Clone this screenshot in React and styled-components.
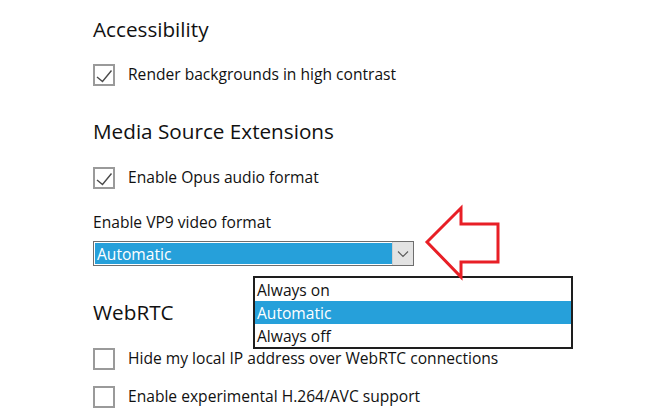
import React from "react";
import styled, { createGlobalStyle } from "styled-components";

const Global = createGlobalStyle`
  html, body { margin: 0; padding: 0; background: #fff; }
  body { font-family: "Segoe UI", "Open Sans", "Noto Sans", sans-serif; color: #000; }
`;

const Page = styled.div`
  position: relative;
  width: 655px;
  height: 409px;
  overflow: hidden;
  box-sizing: border-box;
  padding: 15px 0 0 93px;
  display: flex;
  flex-direction: column;
`;

const Heading = styled.h2`
  margin: ${(p) => p.$top || 0}px 0 0 0;
  font-size: 20.7px;
  font-weight: 400;
  line-height: 28px;
  height: 28px;
  color: #111;
`;

const Row = styled.label`
  margin-top: ${(p) => p.$top || 0}px;
  display: flex;
  align-items: center;
  gap: 13px;
  height: 22px;
  font-size: 15.6px;
  line-height: 21px;
  color: #111;
`;

const Text = styled.span`
  padding-bottom: 1px;
`;

const Box = styled.span`
  box-sizing: border-box;
  width: 22px;
  height: 22px;
  border: 2px solid #9a9a9a;
  background: #fff;
  display: flex;
  align-items: center;
  justify-content: center;
  flex: none;
`;

const FieldLabel = styled.div`
  margin-top: ${(p) => p.$top || 0}px;
  font-size: 15.6px;
  line-height: 20px;
  height: 20px;
  color: #111;
`;

const SelectWrap = styled.div`
  position: relative;
  margin-top: 9px;
  width: 321px;
`;

const Select = styled.div`
  box-sizing: border-box;
  width: 321px;
  height: 25px;
  border: 1px solid #6e6e6e;
  padding: 1px 0 1px 1px;
  display: flex;
  background: #fff;
`;

const SelectValue = styled.div`
  flex: 1;
  background: #26a0da;
  color: #fff;
  font-size: 15.6px;
  line-height: 21px;
  padding: 1px 0 0 2px;
  box-sizing: border-box;
`;

const SelectButton = styled.div`
  width: 20px;
  margin: -1px 0;
  background: #e3e3e3;
  border-left: 1px solid #d0d0d0;
  display: flex;
  align-items: center;
  justify-content: center;
`;

const List = styled.ul`
  position: absolute;
  left: 160px;
  top: 35px;
  box-sizing: border-box;
  width: 320px;
  margin: 0;
  padding: 0;
  list-style: none;
  border: 2px solid #1e1e1e;
  background: #fff;
  z-index: 2;
`;

const Item = styled.li`
  height: 23px;
  line-height: 24px;
  font-size: 15.6px;
  padding-left: 2px;
  overflow: hidden;
  background: ${(p) => (p.$selected ? "#26a0da" : "#fff")};
  color: ${(p) => (p.$selected ? "#fff" : "#111")};
`;

const Arrow = styled.svg`
  position: absolute;
  left: 0;
  top: 0;
  pointer-events: none;
  z-index: 3;
`;

const Check = () => (
  <svg width="18" height="18" viewBox="0 0 18 18">
    <polyline
      points="2,11 7.5,15.5 16.5,4.5"
      fill="none"
      stroke="#4a4a4a"
      strokeWidth="1.4"
    />
  </svg>
);

const Checkbox = ({ checked, children, top }) => (
  <Row $top={top}>
    <Box>{checked && <Check />}</Box>
    <Text>{children}</Text>
  </Row>
);

export default function App() {
  return (
    <>
      <Global />
      <Page>
        <Heading>Accessibility</Heading>
        <Checkbox checked top={21}>
          Render backgrounds in high contrast
        </Checkbox>
        <Heading $top={31}>Media Source Extensions</Heading>
        <Checkbox checked top={22}>
          Enable Opus audio format
        </Checkbox>
        <FieldLabel $top={23}>Enable VP9 video format</FieldLabel>
        <SelectWrap>
          <Select>
            <SelectValue>Automatic</SelectValue>
            <SelectButton>
              <svg width="12" height="8" viewBox="0 0 12 8">
                <polyline points="1,1.5 6,6.5 11,1.5" fill="none" stroke="#5a5a5a" strokeWidth="1.1" />
              </svg>
            </SelectButton>
          </Select>
          <List>
            <Item>Always on</Item>
            <Item $selected>Automatic</Item>
            <Item>Always off</Item>
          </List>
        </SelectWrap>
        <Heading $top={32}>WebRTC</Heading>
        <Checkbox top={22}>Hide my local IP address over WebRTC connections</Checkbox>
        <Checkbox top={16}>Enable experimental H.264/AVC support</Checkbox>
        <Arrow width="655" height="409" viewBox="0 0 655 409">
          <polygon
            points="427,242 461,208 461,224 498,224 498,262 461,262 461,277"
            fill="none"
            stroke="#e81f26"
            strokeWidth="3"
            strokeLinejoin="miter"
          />
        </Arrow>
      </Page>
    </>
  );
}
